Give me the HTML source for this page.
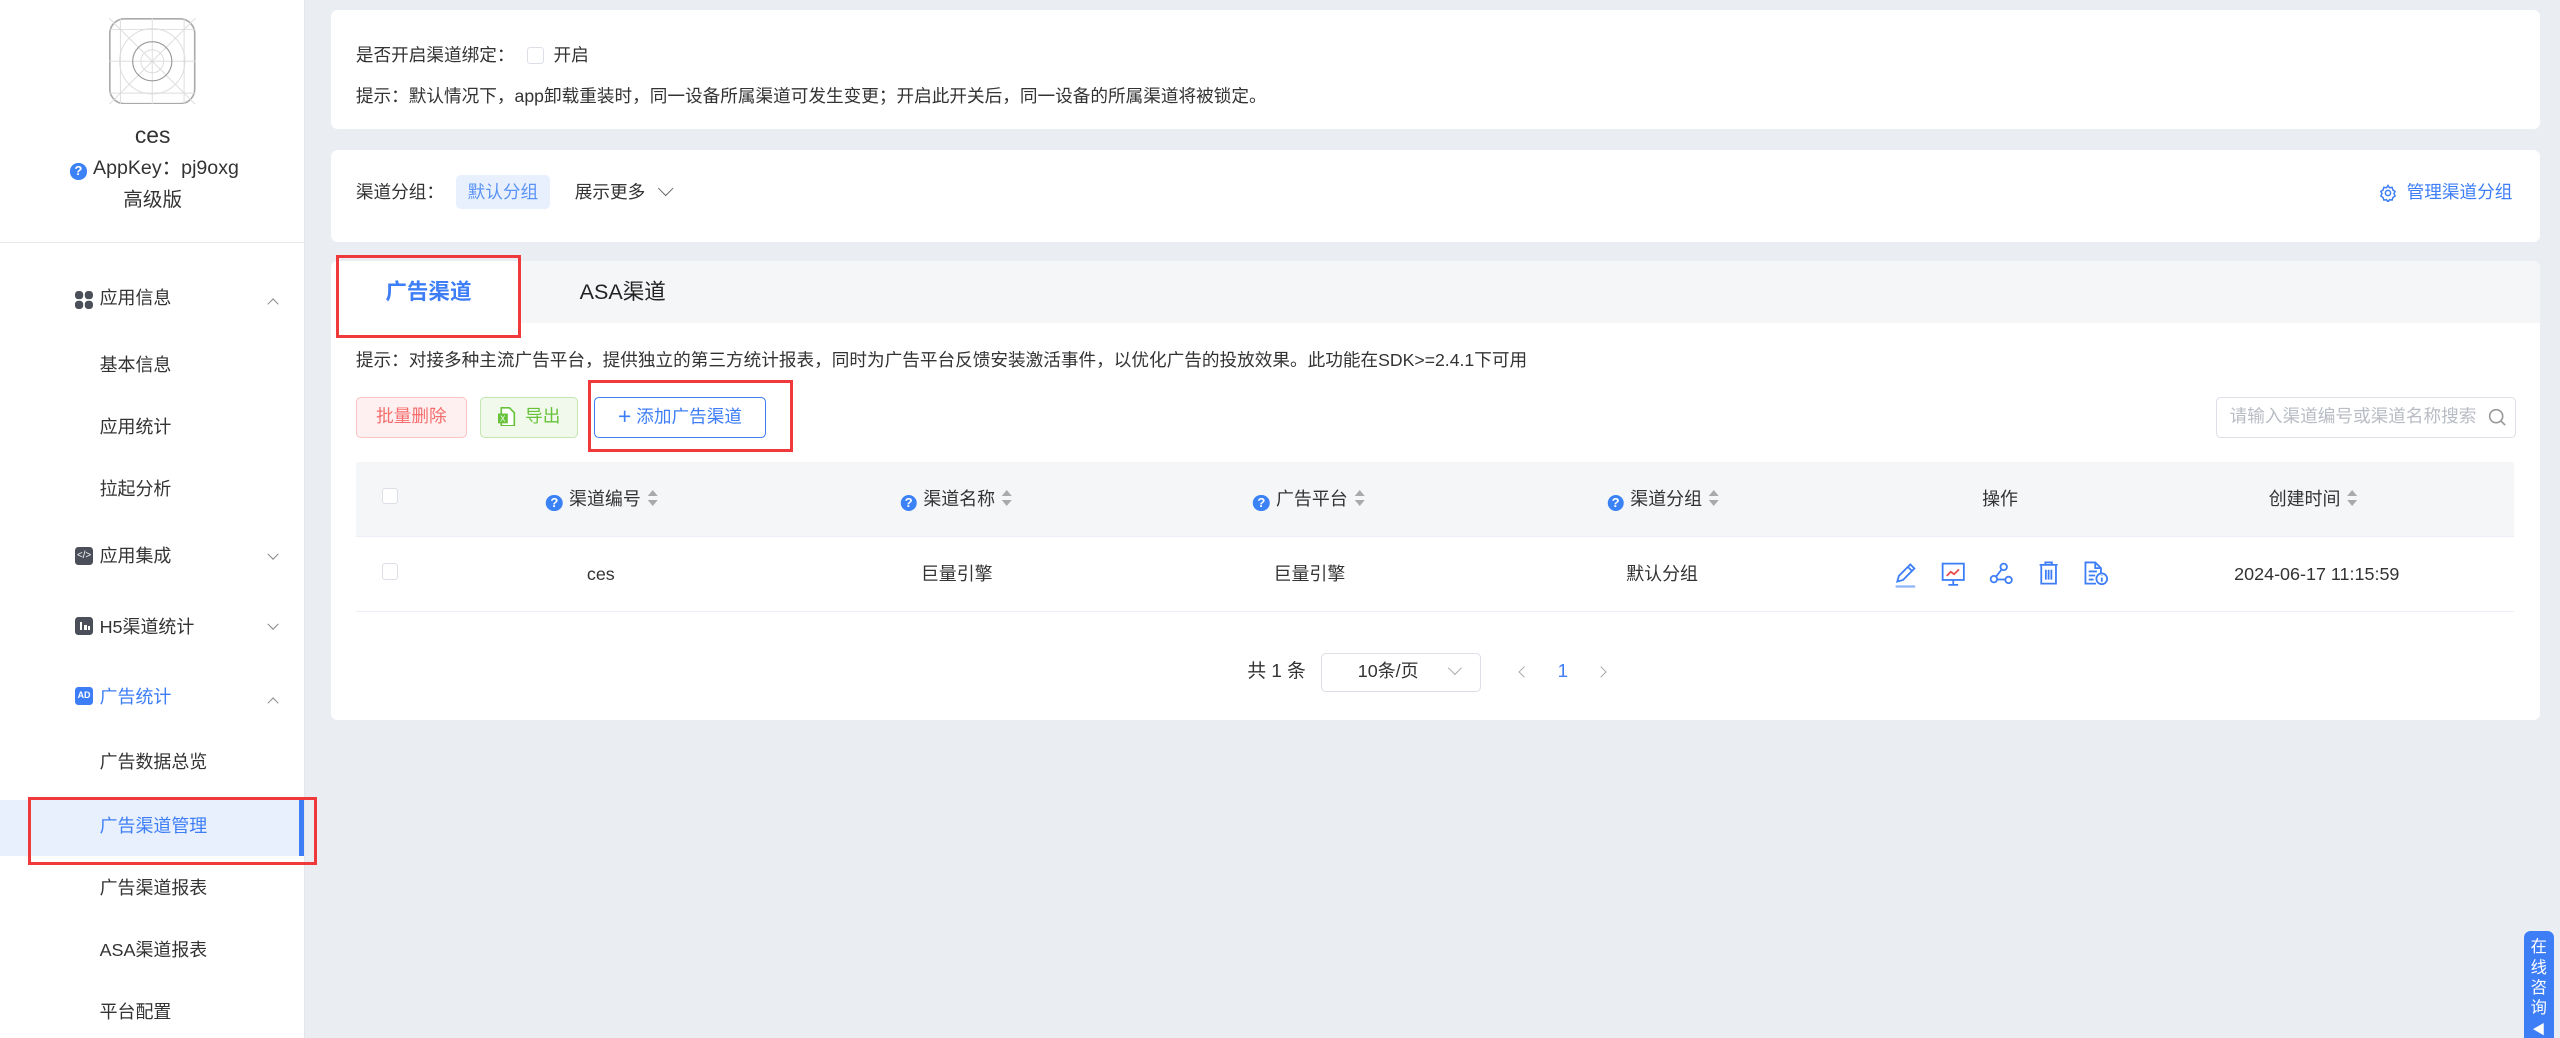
<!DOCTYPE html>
<html><head><meta charset="utf-8">
<style>
*{margin:0;padding:0;box-sizing:border-box}
html,body{width:2560px;height:1038px;overflow:hidden;background:#eaedf2}
#w{zoom:1.6327;width:1568px;height:636px;position:relative;font-family:"Liberation Sans","Noto Sans CJK SC",sans-serif;color:#333;font-size:10.8px}
.a{position:absolute;white-space:nowrap;line-height:14px}
.side{position:absolute;left:0;top:0;width:187px;height:636px;background:#fff;border-right:1px solid #e4e6ea}
.card{position:absolute;background:#fff;border-radius:4px}
.mi{position:absolute;left:61px;font-size:11px;color:#333;line-height:14px;white-space:nowrap}
.chev{position:absolute;left:165px;width:5px;height:5px;border-left:1px solid #888;border-top:1px solid #888}
.q{display:inline-block;width:10px;height:10px;border-radius:50%;background:#3b82f6;color:#fff;font-size:8px;line-height:10px;text-align:center;font-weight:bold;vertical-align:-1px;margin-right:4px}
.sort{display:inline-block;vertical-align:-1px;margin-left:4px;width:7px;height:10px;position:relative}
.sort:before{content:"";position:absolute;left:0;top:0;border:3.5px solid transparent;border-bottom:4px solid #aaa;border-top:0}
.sort:after{content:"";position:absolute;left:0;top:6px;border:3.5px solid transparent;border-top:4px solid #aaa;border-bottom:0}
.th{position:absolute;top:299px;font-size:11px;line-height:14px;color:#333;transform:translateX(-50%);white-space:nowrap}
.td{position:absolute;top:345px;font-size:11px;line-height:14px;color:#333;transform:translateX(-50%);white-space:nowrap}
.cb{position:absolute;width:10px;height:10px;border:1px solid #dcdfe6;border-radius:2px;background:#fff}
.red{position:absolute;border:2px solid #f0393b}
</style></head><body><div id="w">
<div class="side">
  <svg class="a" style="left:67px;top:11px" width="53" height="53" viewBox="0 0 53 53">
    <rect x="0.5" y="0.5" width="52" height="52" rx="9" fill="#fff" stroke="#aaa"/>
    <g stroke="#ddd" fill="none" stroke-width="0.6"><line x1="0" y1="0" x2="53" y2="53"/><line x1="53" y1="0" x2="0" y2="53"/><line x1="26.5" y1="0" x2="26.5" y2="53"/><line x1="0" y1="26.5" x2="53" y2="26.5"/><line x1="7" y1="0" x2="7" y2="53"/><line x1="46" y1="0" x2="46" y2="53"/><line x1="0" y1="7" x2="53" y2="7"/><line x1="0" y1="46" x2="53" y2="46"/><circle cx="26.5" cy="26.5" r="20"/><circle cx="26.5" cy="26.5" r="7"/></g>
    <circle cx="26.5" cy="26.5" r="12" fill="none" stroke="#999" stroke-width="0.7"/>
  </svg>
  <div class="a" style="left:0;width:187px;text-align:center;top:75px;font-size:14px;line-height:16px;color:#333">ces</div>
  <div class="a" style="left:43px;top:96px;font-size:12px">​<span class="q">?</span>AppKey：pj9oxg</div>
  <div class="a" style="left:0;width:187px;text-align:center;top:116px;font-size:12px">高级版</div>
  <div class="a" style="left:0;top:148px;width:187px;height:1px;background:#e8e8e8"></div>

  <svg class="a" style="left:46px;top:178px" width="11" height="11" viewBox="0 0 11 11" fill="#4a4f5a"><rect x="0" y="0" width="5" height="5" rx="2"/><rect x="6" y="0" width="5" height="5" rx="2"/><rect x="0" y="6" width="5" height="5" rx="2"/><rect x="6" y="6" width="5" height="5" rx="2"/></svg>
  <div class="mi" style="top:176px">应用信息</div><div class="chev" style="top:184px;transform:rotate(45deg)"></div>
  <div class="mi" style="top:217px">基本信息</div>
  <div class="mi" style="top:255px">应用统计</div>
  <div class="mi" style="top:293px">拉起分析</div>
  <div class="a" style="left:46px;top:335px;width:11px;height:11px;border-radius:2px;background:#4a4f5a;color:#fff;font-size:6px;line-height:11px;text-align:center">&lt;/&gt;</div>
  <div class="mi" style="top:334px">应用集成</div><div class="chev" style="top:337px;transform:rotate(225deg)"></div>
  <div class="a" style="left:46px;top:378px;width:11px;height:11px;border-radius:2px;background:#4a4f5a"><div class="a" style="left:3px;top:3px;width:1.5px;height:5px;background:#fff"></div><div class="a" style="left:5.5px;top:4.5px;width:1.5px;height:3.5px;background:#fff"></div><div class="a" style="left:8px;top:5.5px;width:1.2px;height:2.5px;background:#fff"></div></div>
  <div class="mi" style="top:377px">H5渠道统计</div><div class="chev" style="top:380px;transform:rotate(225deg)"></div>
  <div class="a" style="left:46px;top:421px;width:11px;height:11px;border-radius:2px;background:#3d7ef7;color:#fff;font-size:5.5px;line-height:11px;text-align:center;font-weight:bold">AD</div>
  <div class="mi" style="top:420px;color:#3d7ef7">广告统计</div><div class="chev" style="top:428px;transform:rotate(45deg)"></div>
  <div class="mi" style="top:460px">广告数据总览</div>
  <div class="a" style="left:0;top:490px;width:186px;height:34px;background:#e8f0fe"></div>
  <div class="a" style="left:183px;top:490px;width:3px;height:34px;background:#3d7ef7"></div>
  <div class="mi" style="top:499px;color:#3d7ef7">广告渠道管理</div>
  <div class="mi" style="top:537px">广告渠道报表</div>
  <div class="mi" style="top:575px">ASA渠道报表</div>
  <div class="mi" style="top:613px">平台配置</div>
</div>
<div class="red" style="left:17px;top:488px;width:177px;height:42px"></div>

<div class="card" style="left:203px;top:6px;width:1353px;height:73px">
  <div class="a" style="left:15px;top:21px">是否开启渠道绑定：</div>
  <div class="cb" style="left:120px;top:23px"></div>
  <div class="a" style="left:136px;top:21px">开启</div>
  <div class="a" style="left:15px;top:46px">提示：默认情况下，app卸载重装时，同一设备所属渠道可发生变更；开启此开关后，同一设备的所属渠道将被锁定。</div>
</div>

<div class="card" style="left:203px;top:92px;width:1353px;height:56px">
  <div class="a" style="left:15px;top:19px">渠道分组：</div>
  <div class="a" style="left:76px;top:15px;width:58px;height:21px;border-radius:3px;background:#e8f0fe;color:#5b93f5;text-align:center;line-height:21px">默认分组</div>
  <div class="a" style="left:149px;top:19px">展示更多</div>
  <div class="a" style="left:201px;top:20px;width:7px;height:7px;border-right:1px solid #666;border-bottom:1px solid #666;transform:rotate(45deg)"></div>
  <svg class="a" style="left:1254px;top:21px" width="11" height="11" viewBox="0 0 24 24" fill="none" stroke="#3d7ef7" stroke-width="2"><path d="M12 2l2 3 3.5-.5 1 3.4 3 2.1-1.5 3 1.5 3-3 2.1-1 3.4-3.5-.5-2 3-2-3-3.5.5-1-3.4-3-2.1 1.5-3-1.5-3 3-2.1 1-3.4 3.5.5z"/><circle cx="12" cy="12" r="3.5"/></svg>
  <div class="a" style="left:1271px;top:19px;color:#3d7ef7">管理渠道分组</div>
</div>

<div class="card" style="left:203px;top:160px;width:1353px;height:281px;overflow:hidden">
  <div class="a" style="left:0;top:0;width:1353px;height:38px;background:#f5f6f8"></div>
  <div class="a" style="left:0;top:0;width:115px;height:38px;background:#fff"></div>
  <div class="a" style="left:33px;top:12px;font-size:13.2px;font-weight:bold;color:#3d7ef7">广告渠道</div>
  <div class="a" style="left:152px;top:12px;font-size:13.2px;color:#222">ASA渠道</div>
  <div class="a" style="left:15px;top:54px">提示：对接多种主流广告平台，提供独立的第三方统计报表，同时为广告平台反馈安装激活事件，以优化广告的投放效果。此功能在SDK&gt;=2.4.1下可用</div>
  <div class="a" style="left:15px;top:83px;width:68px;height:25px;border:1px solid #fbc4c4;background:#fef0f0;color:#f56c6c;border-radius:3px;text-align:center;line-height:23px">批量删除</div>
  <div class="a" style="left:91px;top:83px;width:60px;height:25px;border:1px solid #c2e7b0;background:#f0f9eb;color:#67c23a;border-radius:3px;line-height:23px;padding-left:27px">导出</div>
  <svg class="a" style="left:102px;top:89px" width="11" height="12" viewBox="0 0 11 12"><path d="M2 0.5h5l3 3v8H2z" fill="#fff" stroke="#67c23a"/><rect x="0" y="4" width="6" height="6" fill="#67c23a"/><text x="1.2" y="9" font-size="5" fill="#fff" font-family="Liberation Sans">X</text></svg>
  <div class="a" style="left:161px;top:83px;width:105px;height:25px;border:1px solid #3d7ef7;background:#fff;color:#3d7ef7;border-radius:3px;text-align:center;line-height:23px"><span style="font-size:14px;vertical-align:-1px">+</span> 添加广告渠道</div>
  <div class="a" style="left:1154px;top:83px;width:184px;height:25px;border:1px solid #dcdfe6;border-radius:3px;color:#b8bcc4;line-height:23px;padding-left:8px">请输入渠道编号或渠道名称搜索</div>
  <svg class="a" style="left:1321px;top:90px" width="11" height="11" viewBox="0 0 11 11" fill="none" stroke="#999"><circle cx="5" cy="5" r="4"/><line x1="8" y1="8" x2="10.5" y2="10.5"/></svg>
</div>
<div class="red" style="left:206px;top:156px;width:113px;height:51px"></div>
<div class="red" style="left:360px;top:233px;width:126px;height:44px"></div>

<!-- table -->
<div class="a" style="left:218px;top:283px;width:1322px;height:46px;background:#f5f6f8;border-bottom:1px solid #ebeef5"></div>
<div class="a" style="left:218px;top:374px;width:1322px;height:1px;background:#ebeef5"></div>
<div class="cb" style="left:234px;top:299px"></div>
<div class="cb" style="left:234px;top:345px"></div>
<div class="th" style="left:369px"><span class="q">?</span>渠道编号<span class="sort"></span></div>
<div class="th" style="left:586px"><span class="q">?</span>渠道名称<span class="sort"></span></div>
<div class="th" style="left:802px"><span class="q">?</span>广告平台<span class="sort"></span></div>
<div class="th" style="left:1019px"><span class="q">?</span>渠道分组<span class="sort"></span></div>
<div class="th" style="left:1225px">操作</div>
<div class="th" style="left:1417px">创建时间<span class="sort"></span></div>
<div class="td" style="left:368px">ces</div>
<div class="td" style="left:586px">巨量引擎</div>
<div class="td" style="left:802px">巨量引擎</div>
<div class="td" style="left:1018px">默认分组</div>
<div class="td" style="left:1419px">2024-06-17 11:15:59</div>
<svg class="a" style="left:1160px;top:344px" width="14" height="16" viewBox="0 0 14 16" fill="none" stroke="#3d7ef7" stroke-width="1.1"><path d="M2 12l1-3.5 7-7 2.5 2.5-7 7z"/><path d="M8.5 3l2.5 2.5"/><line x1="1" y1="15" x2="13" y2="15" stroke="#8fb4f8" stroke-width="1.4"/></svg>
<svg class="a" style="left:1189px;top:344px" width="15" height="15" viewBox="0 0 15 15" fill="none" stroke="#3d7ef7" stroke-width="1.1"><rect x="1" y="1" width="13" height="10"/><path d="M7.5 11v3M4.5 14h6"/><path d="M3.5 8.5l2.5-2.5 2 1.5 3-3" stroke="#e84a4a"/></svg>
<svg class="a" style="left:1218px;top:344px" width="15" height="15" viewBox="0 0 15 15" fill="none" stroke="#3d7ef7" stroke-width="1.1"><circle cx="3" cy="10.5" r="2"/><circle cx="9" cy="3" r="2"/><circle cx="12" cy="11" r="2"/><path d="M4.3 9L7.8 4.5M5 10.7h5"/></svg>
<svg class="a" style="left:1248px;top:343px" width="13" height="16" viewBox="0 0 13 16" fill="none" stroke="#3d7ef7" stroke-width="1.1"><path d="M1 3h11M4.5 3V1.5h4V3"/><path d="M2 3.5v11h9v-11"/><path d="M4.8 6v6M6.5 6v6M8.2 6v6"/></svg>
<svg class="a" style="left:1276px;top:343px" width="16" height="16" viewBox="0 0 16 16" fill="none" stroke="#3d7ef7" stroke-width="1.1"><path d="M8 14.5H1.5v-13h6l3.5 3.5v3"/><path d="M7.5 1.5V5H11"/><path d="M3.5 7h5M3.5 9.5h4M3.5 12h3"/><circle cx="11.5" cy="11.5" r="3.3" fill="#fff"/><path d="M11.5 10.8v2.5M11.5 9.5v.3"/></svg>

<!-- pagination -->
<div class="a" style="left:764px;top:404px;font-size:11.5px">共 1 条</div>
<div class="a" style="left:809px;top:400px;width:98px;height:24px;border:1px solid #dcdfe6;border-radius:3px;line-height:22px;padding-left:22px;font-size:11px">10条/页</div>
<div class="a" style="left:888px;top:406px;width:6px;height:6px;border-right:1px solid #aaa;border-bottom:1px solid #aaa;transform:rotate(45deg)"></div>
<div class="a" style="left:931px;top:409px;width:5px;height:5px;border-left:1px solid #aaa;border-bottom:1px solid #aaa;transform:rotate(45deg)"></div>
<div class="a" style="left:954px;top:404px;color:#3d7ef7;font-size:11.5px">1</div>
<div class="a" style="left:978px;top:409px;width:5px;height:5px;border-right:1px solid #aaa;border-top:1px solid #aaa;transform:rotate(45deg)"></div>

<!-- chat -->
<div class="a" style="left:1546px;top:570px;width:18px;height:70px;background:#3d7ef7;border-radius:4px 4px 0 0;color:#fff;font-size:10px;line-height:12.5px;text-align:center;padding-top:4px;white-space:normal">在<br>线<br>咨<br>询<br><span style="font-size:8px">◀</span></div>
</div></body></html>
